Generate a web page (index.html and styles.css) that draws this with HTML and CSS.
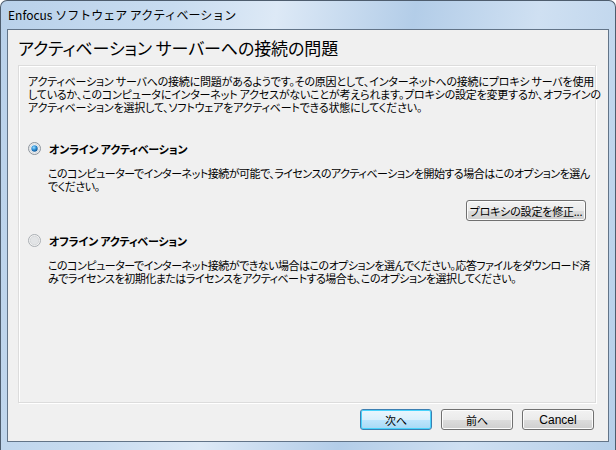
FILE: index.html
```html
<!DOCTYPE html>
<html lang="ja">
<head>
  <meta charset="UTF-8">
  <title>Enfocus ソフトウェア アクティベーション</title>
  <link rel="stylesheet" href="styles.css">
</head>
<body>
  <div class="window">
    <div class="titlebar">Enfocus ソフトウェア アクティベーション</div>

    <div class="client">
      <h1 class="heading">アクティベーション サーバーへの接続の問題</h1>

      <div class="panel">
        <p class="intro">アクティベーション サーバへの接続に問題があるようです。その原因として、インターネットへの接続にプロキシ サーバを使用<br>しているか、このコンピュータにインターネット アクセスがないことが考えられます。プロキシの設定を変更するか、オフラインの<br>アクティベーションを選択して、ソフトウェアをアクティベートできる状態にしてください。</p>

        <label class="option">
          <svg class="radio" width="13" height="13" viewBox="0 0 13 13">
            <defs>
              <radialGradient id="dot" cx="40%" cy="35%" r="70%">
                <stop offset="0" stop-color="#9fe0ff"/>
                <stop offset="0.5" stop-color="#2e8fd6"/>
                <stop offset="1" stop-color="#0d4f8a"/>
              </radialGradient>
            </defs>
            <circle cx="6.5" cy="6.5" r="6" fill="#eef0f2" stroke="#8c939b"/>
            <circle cx="6.5" cy="6.5" r="4.5" fill="#fff" stroke="#c9ced3" stroke-width="0.8"/>
            <circle cx="6.5" cy="6.5" r="3.2" fill="url(#dot)"/>
          </svg>
          <span>オンライン アクティベーション</span>
        </label>
        <p class="note">このコンピューターでインターネット接続が可能で、ライセンスのアクティベーションを開始する場合はこのオプションを選ん<br>でください。</p>
        <div class="proxy-row">
          <button class="btn btn-wide">プロキシの設定を修正...</button>
        </div>

        <label class="option">
          <svg class="radio" width="13" height="13" viewBox="0 0 13 13">
            <circle cx="6.5" cy="6.5" r="6" fill="#f4f4f4" stroke="#a8adb2"/>
            <circle cx="6.5" cy="6.5" r="4.3" fill="#e2e4e6" stroke="#d0d3d6" stroke-width="0.8"/>
          </svg>
          <span>オフライン アクティベーション</span>
        </label>
        <p class="note">このコンピューターでインターネット接続ができない場合はこのオプションを選んでください。応答ファイルをダウンロード済<br>みでライセンスを初期化またはライセンスをアクティベートする場合も、このオプションを選択してください。</p>
      </div>

      <div class="footer">
        <button class="btn btn-default">次へ</button>
        <button class="btn">前へ</button>
        <button class="btn btn-latin">Cancel</button>
      </div>
    </div>
  </div>
</body>
</html>
```

FILE: styles.css
```css
body {
  margin: 0;
  font-family: "Noto Sans CJK JP", "Liberation Sans", sans-serif;
  font-feature-settings: "palt";
  font-size: 11px;
  letter-spacing: -0.2px;
  color: #000;
  background: #fff;
}
.window {
  width: 616px;
  height: 450px;
  box-sizing: border-box;
  border: 1px solid #4e5d6e;
  border-bottom: none;
  border-radius: 7px 7px 0 0;
  background: linear-gradient(100deg, #b9d1ea 0%, #c8dcf0 25%, #dde9f6 40%, #b3cde8 60%, #cfe0f2 78%, #b6cfe9 100%);
  padding: 0 6px;
}
.titlebar {
  height: 28px;
  line-height: 28px;
  padding-left: 1px;
  font-size: 12px;
  font-feature-settings: normal;
  letter-spacing: 0;
  white-space: nowrap;
}
.client {
  height: 413px;
  box-sizing: border-box;
  border: 1px solid #627488;
  background: #f0f0f0;
  display: flex;
  flex-direction: column;
}
.heading {
  margin: 0;
  height: 35px;
  line-height: 35px;
  padding-left: 10px;
  font-size: 17px;
  letter-spacing: -0.1px;
  font-weight: normal;
  white-space: nowrap;
}
.panel {
  margin: 0 12px 0 10px;
  height: 338px;
  box-sizing: border-box;
  border: 1px solid #dcdcdc;
  box-shadow: inset 1px 1px 0 #fff, 1px 1px 0 #fff;
  padding: 9px 9px 0 9px;
}
.intro, .note {
  margin: 0;
  line-height: 13px;
  white-space: nowrap;
}
.option {
  display: flex;
  align-items: center;
  height: 13px;
  margin-top: 28px;
  font-weight: bold;
  white-space: nowrap;
}
.option span {
  margin-left: 8px;
}
.radio {
  display: block;
}
.note {
  margin-top: 12px;
  padding-left: 20px;
  letter-spacing: -0.5px;
}
.proxy-row {
  display: flex;
  justify-content: flex-end;
  margin-top: 7px;
}
.proxy-row + .option {
  margin-top: 13px;
}
.btn {
  width: 72px;
  height: 21px;
  padding: 0;
  font-family: inherit;
  font-feature-settings: "palt";
  font-size: 11px;
  letter-spacing: -0.2px;
  white-space: nowrap;
  color: #000;
  border: 1px solid #707070;
  border-radius: 3px;
  background: linear-gradient(#f2f2f2 0%, #ebebeb 50%, #dddddd 51%, #cfcfcf 100%);
  box-shadow: inset 0 0 0 1px #fcfcfc;
}
.btn-wide {
  width: 120px;
}
.btn-default {
  border-color: #3c7fb1;
  background: linear-gradient(#eaf6fd 0%, #d9f0fc 50%, #bee6fd 51%, #a7d9f5 100%);
  box-shadow: inset 0 0 0 1px #48d3fc;
}
.btn-latin {
  font-family: "Liberation Sans", sans-serif;
  font-size: 12px;
  letter-spacing: 0;
}
.footer {
  display: flex;
  justify-content: flex-end;
  gap: 9px;
  padding: 6px 14px 0 0;
}
```
